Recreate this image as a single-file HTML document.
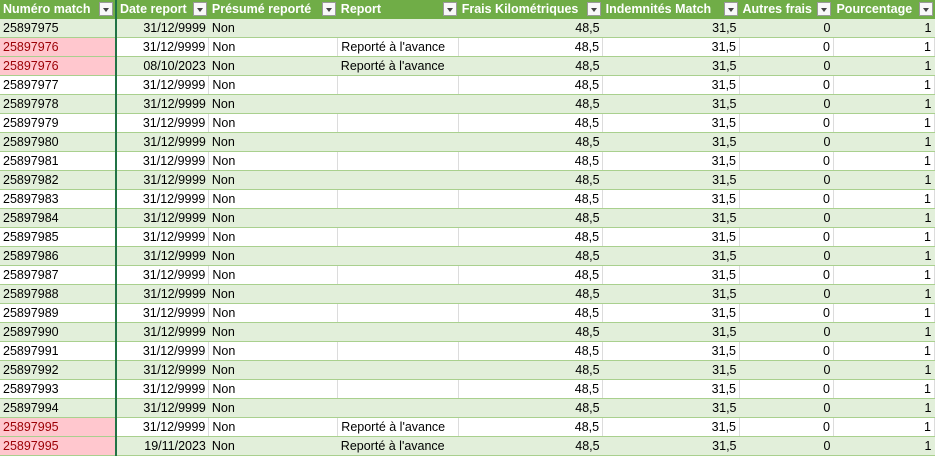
<!DOCTYPE html>
<html><head><meta charset="utf-8"><style>
body{margin:0;width:935px;height:453px;overflow:hidden;background:#fff;font-family:"Liberation Sans",Arial,sans-serif;font-size:12.5px;color:#000}
table{border-collapse:collapse;table-layout:fixed;position:absolute;left:0;top:0}
td,th{height:17px;padding:1px 3px 0;white-space:nowrap;overflow:hidden;border-bottom:1px solid #A9D08E;line-height:17px}
th{background:#70AD47;color:#fff;font-weight:bold;text-align:left;position:relative;border-bottom:1px solid #70AD47;padding-right:18px}
th i{position:absolute;right:2px;top:2px;width:14px;height:14px;background:#f8f8f8;border:1px solid #9a9a9a;box-sizing:border-box}
th i:after{content:"";position:absolute;left:3px;top:5px;border-left:3.5px solid transparent;border-right:3.5px solid transparent;border-top:4px solid #444}
tr.g td{background:#E2EFDA}
tr.w td{border-right:1px solid #dcdcdc}
.r{text-align:right}
td.p{background:#FFC7CE!important;color:#9C0006}
td.f{border-right:2px solid #217346!important}
</style></head><body>
<table>
<colgroup><col style="width:116px"><col style="width:93px"><col style="width:129px"><col style="width:121px"><col style="width:144px"><col style="width:137px"><col style="width:94px"><col style="width:101px"></colgroup>
<tr><th style="border-right:2px solid #217346">Numéro match<i></i></th><th>Date report<i></i></th><th>Présumé reporté<i></i></th><th>Report<i></i></th><th>Frais Kilométriques<i></i></th><th>Indemnités Match<i></i></th><th>Autres frais<i></i></th><th>Pourcentage<i></i></th></tr>
<tr class="g"><td class="f">25897975</td><td class="r">31/12/9999</td><td>Non</td><td></td><td class="r">48,5</td><td class="r">31,5</td><td class="r">0</td><td class="r">1</td></tr>
<tr class="w"><td class="f p">25897976</td><td class="r">31/12/9999</td><td>Non</td><td>Reporté à l'avance</td><td class="r">48,5</td><td class="r">31,5</td><td class="r">0</td><td class="r">1</td></tr>
<tr class="g"><td class="f p">25897976</td><td class="r">08/10/2023</td><td>Non</td><td>Reporté à l'avance</td><td class="r">48,5</td><td class="r">31,5</td><td class="r">0</td><td class="r">1</td></tr>
<tr class="w"><td class="f">25897977</td><td class="r">31/12/9999</td><td>Non</td><td></td><td class="r">48,5</td><td class="r">31,5</td><td class="r">0</td><td class="r">1</td></tr>
<tr class="g"><td class="f">25897978</td><td class="r">31/12/9999</td><td>Non</td><td></td><td class="r">48,5</td><td class="r">31,5</td><td class="r">0</td><td class="r">1</td></tr>
<tr class="w"><td class="f">25897979</td><td class="r">31/12/9999</td><td>Non</td><td></td><td class="r">48,5</td><td class="r">31,5</td><td class="r">0</td><td class="r">1</td></tr>
<tr class="g"><td class="f">25897980</td><td class="r">31/12/9999</td><td>Non</td><td></td><td class="r">48,5</td><td class="r">31,5</td><td class="r">0</td><td class="r">1</td></tr>
<tr class="w"><td class="f">25897981</td><td class="r">31/12/9999</td><td>Non</td><td></td><td class="r">48,5</td><td class="r">31,5</td><td class="r">0</td><td class="r">1</td></tr>
<tr class="g"><td class="f">25897982</td><td class="r">31/12/9999</td><td>Non</td><td></td><td class="r">48,5</td><td class="r">31,5</td><td class="r">0</td><td class="r">1</td></tr>
<tr class="w"><td class="f">25897983</td><td class="r">31/12/9999</td><td>Non</td><td></td><td class="r">48,5</td><td class="r">31,5</td><td class="r">0</td><td class="r">1</td></tr>
<tr class="g"><td class="f">25897984</td><td class="r">31/12/9999</td><td>Non</td><td></td><td class="r">48,5</td><td class="r">31,5</td><td class="r">0</td><td class="r">1</td></tr>
<tr class="w"><td class="f">25897985</td><td class="r">31/12/9999</td><td>Non</td><td></td><td class="r">48,5</td><td class="r">31,5</td><td class="r">0</td><td class="r">1</td></tr>
<tr class="g"><td class="f">25897986</td><td class="r">31/12/9999</td><td>Non</td><td></td><td class="r">48,5</td><td class="r">31,5</td><td class="r">0</td><td class="r">1</td></tr>
<tr class="w"><td class="f">25897987</td><td class="r">31/12/9999</td><td>Non</td><td></td><td class="r">48,5</td><td class="r">31,5</td><td class="r">0</td><td class="r">1</td></tr>
<tr class="g"><td class="f">25897988</td><td class="r">31/12/9999</td><td>Non</td><td></td><td class="r">48,5</td><td class="r">31,5</td><td class="r">0</td><td class="r">1</td></tr>
<tr class="w"><td class="f">25897989</td><td class="r">31/12/9999</td><td>Non</td><td></td><td class="r">48,5</td><td class="r">31,5</td><td class="r">0</td><td class="r">1</td></tr>
<tr class="g"><td class="f">25897990</td><td class="r">31/12/9999</td><td>Non</td><td></td><td class="r">48,5</td><td class="r">31,5</td><td class="r">0</td><td class="r">1</td></tr>
<tr class="w"><td class="f">25897991</td><td class="r">31/12/9999</td><td>Non</td><td></td><td class="r">48,5</td><td class="r">31,5</td><td class="r">0</td><td class="r">1</td></tr>
<tr class="g"><td class="f">25897992</td><td class="r">31/12/9999</td><td>Non</td><td></td><td class="r">48,5</td><td class="r">31,5</td><td class="r">0</td><td class="r">1</td></tr>
<tr class="w"><td class="f">25897993</td><td class="r">31/12/9999</td><td>Non</td><td></td><td class="r">48,5</td><td class="r">31,5</td><td class="r">0</td><td class="r">1</td></tr>
<tr class="g"><td class="f">25897994</td><td class="r">31/12/9999</td><td>Non</td><td></td><td class="r">48,5</td><td class="r">31,5</td><td class="r">0</td><td class="r">1</td></tr>
<tr class="w"><td class="f p">25897995</td><td class="r">31/12/9999</td><td>Non</td><td>Reporté à l'avance</td><td class="r">48,5</td><td class="r">31,5</td><td class="r">0</td><td class="r">1</td></tr>
<tr class="g"><td class="f p">25897995</td><td class="r">19/11/2023</td><td>Non</td><td>Reporté à l'avance</td><td class="r">48,5</td><td class="r">31,5</td><td class="r">0</td><td class="r">1</td></tr>
</table>
</body></html>
